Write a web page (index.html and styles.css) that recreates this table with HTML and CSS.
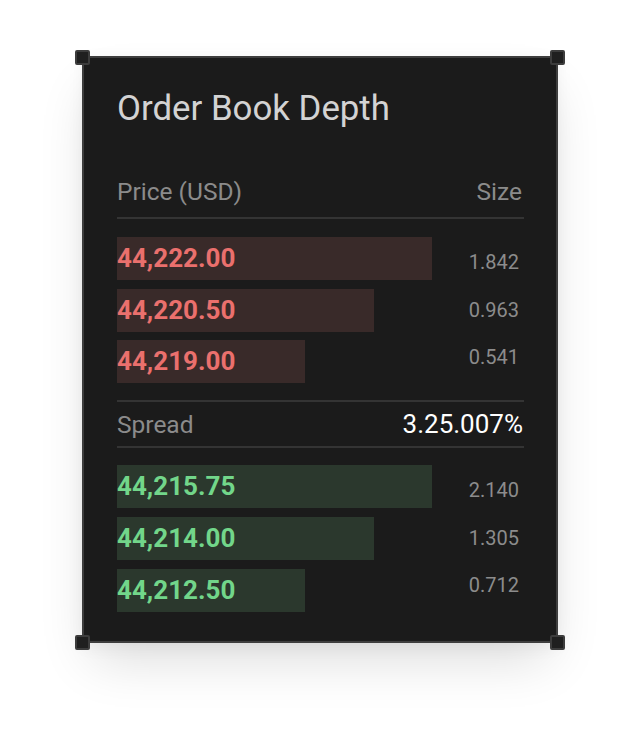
FILE: index.html
```html
<!DOCTYPE html>
<html lang="en">
<head>
<meta charset="utf-8">
<title>Order Book Depth</title>
<link rel="stylesheet" href="styles.css">
</head>
<body>
<div class="stage">
  <section class="card">
    <span class="handle handle-tl"></span>
    <span class="handle handle-tr"></span>
    <span class="handle handle-bl"></span>
    <span class="handle handle-br"></span>

    <h1 class="title">Order Book Depth</h1>

    <div class="head">
      <span>Price (USD)</span>
      <span class="head-size">Size</span>
    </div>

    <div class="book ask">
      <div class="bars">
        <div class="bar" style="width:100%">44,222.00</div>
        <div class="bar" style="width:81.5%">44,220.50</div>
        <div class="bar" style="width:59.6%">44,219.00</div>
      </div>
      <div class="sizes">
        <div class="size">1.842</div>
        <div class="size">0.963</div>
        <div class="size">0.541</div>
      </div>
    </div>

    <div class="spread">
      <span class="spread-label">Spread</span>
      <span class="spread-value">3.25.007%</span>
    </div>

    <div class="book bid">
      <div class="bars">
        <div class="bar" style="width:100%">44,215.75</div>
        <div class="bar" style="width:81.5%">44,214.00</div>
        <div class="bar" style="width:59.6%">44,212.50</div>
      </div>
      <div class="sizes">
        <div class="size">2.140</div>
        <div class="size">1.305</div>
        <div class="size">0.712</div>
      </div>
    </div>
  </section>
</div>
</body>
</html>
```

FILE: styles.css
```css
* { box-sizing: border-box; }

html, body {
  margin: 0;
  padding: 0;
  background: #ffffff;
}

body {
  font-family: Roboto, "Liberation Sans", sans-serif;
  width: 640px;
  height: 750px;
  overflow: hidden;
}

.stage {
  display: flex;
  justify-content: center;
  padding-top: 56px;
}

.card {
  position: relative;
  width: 476px;
  background: #1b1b1b;
  border: 2px solid #3e3e3e;
  padding: 30px 32px 29px 33px;
  box-shadow: 0 26px 50px -10px rgba(0, 0, 0, 0.14), 0 4px 16px rgba(0, 0, 0, 0.05);
}

.handle {
  position: absolute;
  width: 15px;
  height: 15px;
  background: #1f1f1f;
  border: 2px solid #3c3c3c;
  border-radius: 2px;
}
.handle-tl { top: -8px; left: -9px; }
.handle-tr { top: -8px; right: -9px; }
.handle-bl { bottom: -9px; left: -9px; }
.handle-br { bottom: -9px; right: -9px; }

.title {
  margin: 0 0 50px;
  font-size: 34.8px;
  line-height: 40px;
  font-weight: 400;
  color: #d3d3d3;
}

.head {
  display: flex;
  justify-content: space-between;
  font-size: 24.5px;
  line-height: 28px;
  color: #8b8b8b;
  padding-bottom: 11px;
  border-bottom: 2px solid #343434;
}

.head-size { padding-right: 2px; }

.book {
  display: grid;
  grid-template-columns: 1fr 92px;
  align-items: start;
  margin-top: 18px;
}

.spread + .book { margin-top: 17px; }

.bars {
  display: flex;
  flex-direction: column;
  gap: 8.7px;
}

.bar {
  height: 43px;
  line-height: 43px;
  font-size: 26px;
  font-weight: 700;
  white-space: nowrap;
}

.ask .bar { background: #392a29; color: #ea706d; }
.bid .bar { background: #2b382d; color: #72d68a; }

.sizes {
  display: flex;
  flex-direction: column;
  gap: 23.5px;
  padding-top: 13px;
}

.size {
  font-size: 20px;
  line-height: 24px;
  color: #8c8c8c;
  text-align: right;
  padding-right: 5px;
  font-variant-numeric: tabular-nums;
}

.spread {
  display: flex;
  justify-content: space-between;
  align-items: center;
  height: 48px;
  margin-top: 17px;
  border-top: 2px solid #343434;
  border-bottom: 2px solid #343434;
}

.spread-label { color: #8b8b8b; font-size: 24.5px; }
.spread-value { color: #ffffff; font-size: 26px; padding-right: 1px; }
```
